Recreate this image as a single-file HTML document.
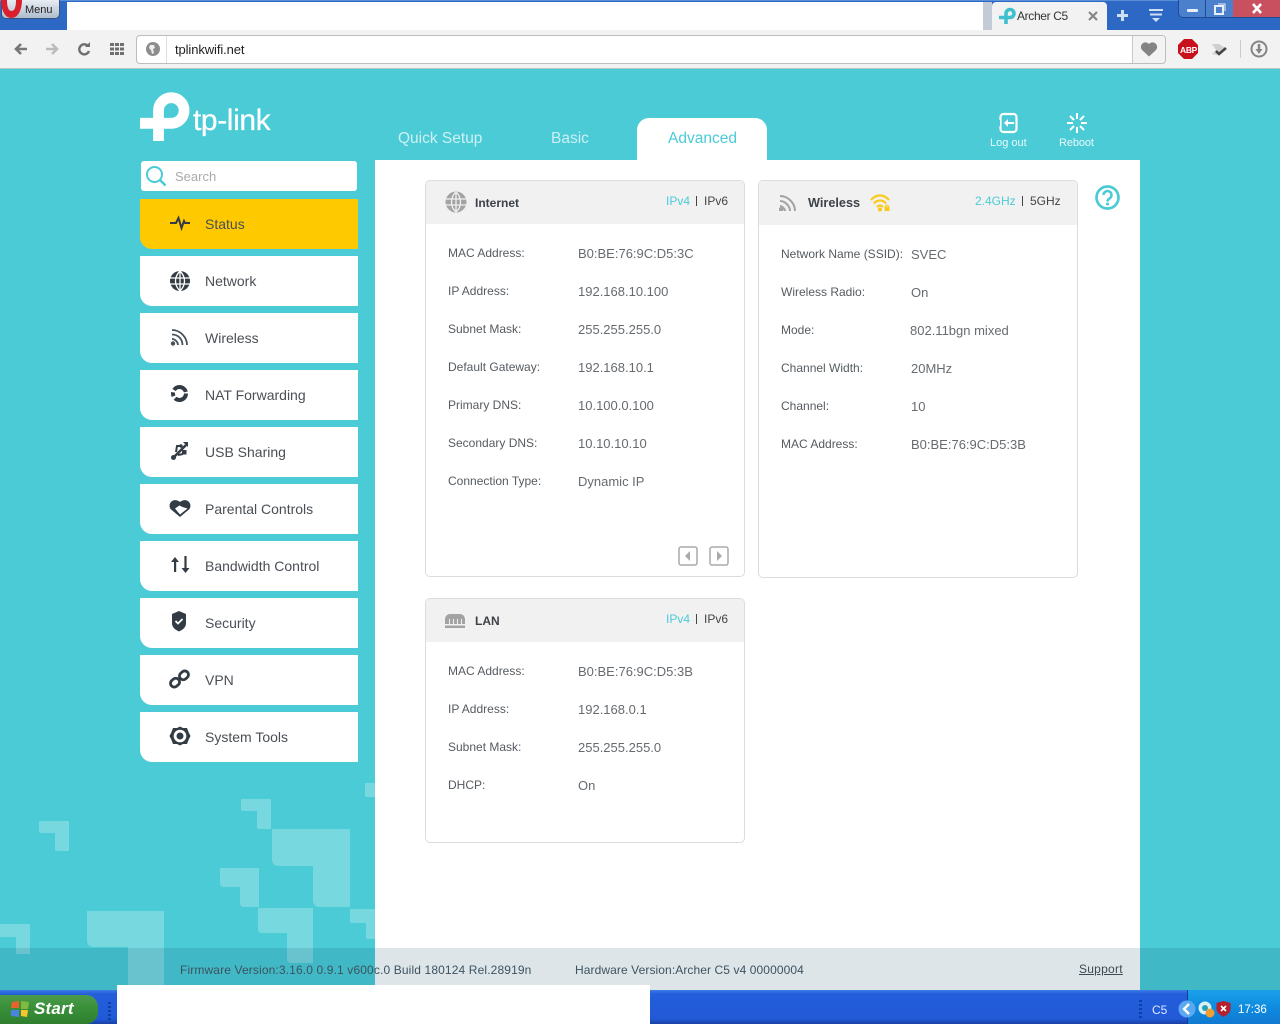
<!DOCTYPE html>
<html><head><meta charset="utf-8"><title>Archer C5</title>
<style>
html,body{margin:0;padding:0}
body{width:1280px;height:1024px;overflow:hidden;position:relative;background:#4acbd6;font-family:"Liberation Sans",sans-serif;color:#4a4f55;font-size:12px}
div,span,svg{position:absolute}
.t{white-space:nowrap;letter-spacing:0;line-height:14px}
.n{position:absolute;left:140px;width:218px;height:50px;background:#fff;border-bottom-left-radius:12px}
.n .t{left:65px;top:18px;font-size:14px;color:#494f55;letter-spacing:0}
.n svg{left:28px;top:12px}
.p{position:absolute;background:#fff;border:1px solid #dcdcdc;border-radius:5px;box-sizing:border-box}
.h{left:0;right:0;top:0;background:#f1f1f1;border-radius:4px 4px 0 0}
.b{font-weight:bold;font-size:12px;color:#3c4248;margin-top:1px}
.l{color:#555b60;margin-top:1px}
.v{color:#666b70;font-size:13px;margin-top:1px}
.c{color:#4acbd6}
.tab{font-size:15.5px;line-height:18px;color:#fff;opacity:.72}
</style></head><body>

<!-- browser chrome -->
<div style="left:0;top:0;width:1280px;height:30px;background:#2d68c4;border-top:1px solid #5a8fd8;box-sizing:border-box"></div>
<div style="left:67px;top:2px;width:916px;height:28px;background:#fff"></div>
<div style="left:983px;top:2px;width:9px;height:28px;background:#c3cbd6"></div>
<div style="left:992px;top:2px;width:115px;height:28px;background:#f2f2f2;border-radius:4px 4px 0 0"></div>
<div style="left:1px;top:0;width:59px;height:19px;background:linear-gradient(#e8edf3,#aebccd);border:1px solid #33527f;border-top:0;border-radius:0 0 5px 5px;box-sizing:border-box"></div>
<div class="t" style="left:25px;top:3px;font-size:11px;color:#222">Menu</div>
<svg style="left:0;top:0" width="24" height="19" viewBox="0 0 24 19"><path d="M1 0c0 10 4 18 10.500 18S22 10 22 0h-6c0 6-1 11-4.500 11S7 6 7 0z" fill="#d9202c"/></svg>
<svg style="left:998px;top:6px" width="19" height="19" viewBox="0 0 19 19"><path d="M8 18V7.500a4 4 0 1 1 4 4H1" fill="none" stroke="#3fc0cf" stroke-width="3.600"/></svg>
<div class="t" style="left:1017px;top:9px;font-size:12px;color:#333;letter-spacing:-.35px">Archer C5</div>
<svg style="left:1087px;top:10px" width="12" height="12" viewBox="0 0 12 12"><path d="M2 2l8 8M10 2l-8 8" stroke="#888" stroke-width="2.200"/></svg>
<svg style="left:1116px;top:9px" width="13" height="13" viewBox="0 0 13 13"><path d="M6.500 1v11M1 6.500h11" stroke="#cfe0f5" stroke-width="3"/></svg>
<svg style="left:1149px;top:9px" width="14" height="14" viewBox="0 0 14 14"><path d="M0 1h14M1 5.500h12" stroke="#cfe0f5" stroke-width="2"/><path d="M3 9h8l-4 4z" fill="#cfe0f5"/></svg>
<div style="left:1178px;top:0;width:28px;height:18px;background:#4b80cc;border:1px solid #1f4b96;border-top:0;border-radius:0 0 0 5px;box-sizing:border-box"></div>
<div style="left:1206px;top:0;width:27px;height:18px;background:#4b80cc;border-bottom:1px solid #1f4b96;box-sizing:border-box"></div>
<div style="left:1233px;top:0;width:47px;height:18px;background:#c9505f;border-bottom:1px solid #1f4b96;box-sizing:border-box"></div>
<div style="left:1187px;top:9px;width:11px;height:3px;background:#e8eef6;border-radius:1px"></div>
<svg style="left:1214px;top:3px" width="12" height="12" viewBox="0 0 12 12"><rect x="1" y="3" width="8" height="8" fill="none" stroke="#e8eef6" stroke-width="2"/><path d="M4 1h7v7" fill="none" stroke="#e8eef6"/></svg>
<svg style="left:1251px;top:3px" width="12" height="11" viewBox="0 0 12 11"><path d="M2 1l8 9M10 1l-8 9" stroke="#fff" stroke-width="2.600"/></svg>

<div style="left:0;top:30px;width:1280px;height:39px;background:#f2f2f2;border-bottom:1px solid #b9c9c2;box-sizing:border-box"></div>
<svg style="left:13px;top:41px" width="16" height="16" viewBox="0 0 16 16"><path d="M14 8H4M8 3L3 8l5 5" fill="none" stroke="#777" stroke-width="2.600"/></svg>
<svg style="left:44px;top:41px" width="16" height="16" viewBox="0 0 16 16"><path d="M2 8h10M8 3l5 5-5 5" fill="none" stroke="#bbb" stroke-width="2.600"/></svg>
<svg style="left:77px;top:41px" width="15" height="16" viewBox="0 0 15 16"><path d="M12 10a5 5 0 1 1-1-5" fill="none" stroke="#6f6f6f" stroke-width="2.400"/><path d="M8 6h5V1z" fill="#6f6f6f"/></svg>
<svg style="left:110px;top:43px" width="14" height="12" viewBox="0 0 14 12" fill="#6f6f6f"><rect width="4" height="3"/><rect x="5" width="4" height="3"/><rect x="10" width="4" height="3"/><rect y="4.500" width="4" height="3"/><rect x="5" y="4.500" width="4" height="3"/><rect x="10" y="4.500" width="4" height="3"/><rect y="9" width="4" height="3"/><rect x="5" y="9" width="4" height="3"/><rect x="10" y="9" width="4" height="3"/></svg>
<div style="left:136px;top:35px;width:1030px;height:29px;background:#fff;border:1px solid #bdbdbd;border-radius:4px;box-sizing:border-box"></div>
<div style="left:166px;top:36px;width:1px;height:27px;background:#ddd"></div>
<div style="left:1132px;top:36px;width:33px;height:27px;background:#f3f3f3;border-left:1px solid #c8c8c8;border-radius:0 4px 4px 0;box-sizing:border-box"></div>
<svg style="left:146px;top:42px" width="14" height="14" viewBox="0 0 14 14"><circle cx="7" cy="7" r="7" fill="#8c8c8c"/><path d="M4 3h4l1 3-2 1 1 4-2 1-1-4-2-2z" fill="#eee"/></svg>
<div class="t" style="left:175px;top:43px;font-size:13px;color:#222;letter-spacing:-.1px">tplinkwifi.net</div>
<svg style="left:1140px;top:41px" width="18" height="16" viewBox="0 0 18 16"><path d="M9 15.500L2 9a4.500 4.500 0 0 1 7-6 4.500 4.500 0 0 1 7 6z" fill="#848484"/></svg>
<svg style="left:1178px;top:39px" width="20" height="20" viewBox="0 0 20 20"><path d="M6 0h8l6 6v8l-6 6H6l-6-6V6z" fill="#c9111e"/></svg>
<div class="t" style="left:1180px;top:43px;font-size:8.500px;font-weight:bold;color:#fff;letter-spacing:-.3px">ABP</div>
<svg style="left:1210px;top:41px" width="18" height="16" viewBox="0 0 18 16"><path d="M2 3h7l6 4-8 7-5-1 4-4z" fill="#cfcfcf"/><path d="M6 10l3 3 7-6" fill="none" stroke="#444" stroke-width="2.500"/></svg>
<div style="left:1240px;top:40px;width:1px;height:18px;background:#ccc"></div>
<svg style="left:1250px;top:40px" width="18" height="18" viewBox="0 0 18 18"><circle cx="9" cy="9" r="7.500" fill="none" stroke="#858585" stroke-width="2"/><path d="M9 4v6" stroke="#858585" stroke-width="2.500"/><path d="M5.500 9h7L9 14z" fill="#858585"/></svg>

<!-- decorative background -->
<svg style="left:0;top:769px" width="375" height="221" viewBox="0 769 375 221" fill="#fff" fill-opacity=".26">
<path d="M39 821h30v30H57q-2 0-2-2v-16H41q-2 0-2-2z"/>
<path d="M241 799h30v30h-12q-2 0-2-2v-16h-14q-2 0-2-2z"/>
<path d="M272 829h78v78h-30q-7 0-7-7v-34h-34q-7 0-7-7z"/>
<path d="M220 868h39v39h-15q-4 0-4-4v-16h-16q-4 0-4-4z"/>
<path d="M258 908h55v55h-22q-4 0-4-4v-26h-25q-4 0-4-4z"/>
<path d="M350 909h25v30h-7q-2 0-2-2v-14h-14q-2 0-2-2z"/>
<path d="M365 783h10v14h-8q-2 0-2-2z"/>
<path d="M87 911h77v79h-36v-43h-34q-7 0-7-7z"/>
<path d="M0 924h30v30H18q-2 0-2-2v-15H0z"/>
</svg>

<!-- header -->
<svg style="left:140px;top:92px" width="50" height="50" viewBox="0 0 50 50"><path d="M18.500 49V18.500a12.800 12.800 0 1 1 12.800 12.800H0" fill="none" stroke="#fff" stroke-width="10.800"/></svg>
<div class="t" style="left:193px;top:103px;font-size:30px;line-height:36px;color:#fff;letter-spacing:-.4px;-webkit-text-stroke:.25px #fff">tp-link</div>
<div class="t tab" style="left:398px;top:130px">Quick Setup</div>
<div class="t tab" style="left:551px;top:130px">Basic</div>
<div style="left:637px;top:118px;width:130px;height:44px;background:#fff;border-radius:12px 12px 0 0"></div>
<div class="t tab" style="left:668px;top:130px;color:#4acbd6;opacity:1">Advanced</div>
<svg style="left:999px;top:112px" width="20" height="22" viewBox="0 0 20 22"><rect x="1.500" y="2" width="16" height="18" rx="3" fill="none" stroke="#fff" stroke-width="2.200"/><path d="M15 11H8" stroke="#fff" stroke-width="2"/><path d="M9 7l-4 4 4 4z" fill="#fff"/><rect x="0" y="8" width="1" height="6" fill="#4acbd6"/></svg>
<div class="t" style="left:990px;top:136px;font-size:11px;color:#e8fafc">Log out</div>
<svg style="left:1066px;top:112px" width="22" height="22" viewBox="0 0 22 22"><path d="M11 1v6M11 15v6M1 11h6M15 11h6M4 4l4 4M14 14l4 4M18 4l-4 4M8 14l-4 4" stroke="#fff" stroke-width="2"/></svg>
<div class="t" style="left:1059px;top:136px;font-size:11px;color:#e8fafc;letter-spacing:-.1px">Reboot</div>

<!-- content -->
<div style="left:375px;top:160px;width:765px;height:830px;background:#fff"></div>

<!-- search -->
<div style="left:141px;top:161px;width:216px;height:30px;background:#fff;border-radius:3px"></div>
<svg style="left:145px;top:165px" width="22" height="22" viewBox="0 0 22 22"><circle cx="9.500" cy="9.500" r="7.500" fill="none" stroke="#4acbd6" stroke-width="2"/><path d="M15 15l5.500 5.500" stroke="#4acbd6" stroke-width="2.500"/></svg>
<div class="t" style="left:175px;top:170px;font-size:13px;color:#aaa">Search</div>

<!-- nav -->
<div class="n" style="top:199px;background:#ffc900"><svg width="24" height="24" viewBox="0 0 24 24"><path d="M2 12h6l2.500-5 3 10 2.500-7 1 2h5" fill="none" stroke="#333c44" stroke-width="2"/></svg><div class="t">Status</div></div>
<div class="n" style="top:256px"><svg width="24" height="24" viewBox="0 0 24 24"><circle cx="12" cy="13" r="10" fill="#333c44"/><path d="M2 10h20M2 16h20M12 3v20M12 3c-6 6-6 14 0 20M12 3c6 6 6 14 0 20" fill="none" stroke="#fff" stroke-width="1.300"/></svg><div class="t">Network</div></div>
<div class="n" style="top:313px"><svg width="24" height="24" viewBox="0 0 24 24" fill="none" stroke="#4a5259" stroke-width="1.800"><path d="M4 5c8 0 15 7 15 15M4 9.500c6 0 10.500 4.500 10.500 10.500M4 14c3 0 6 3 6 6"/><circle cx="5" cy="18.500" r="1.300" fill="#333c44"/></svg><div class="t">Wireless</div></div>
<div class="n" style="top:370px"><svg width="24" height="24" viewBox="0 0 24 24" fill="none" stroke="#333c44" stroke-width="4"><circle cx="11.500" cy="11.500" r="6.500" stroke-dasharray="15 2.500 4 2.500 15 2.500"/></svg><div class="t">NAT Forwarding</div></div>
<div class="n" style="top:427px"><svg width="24" height="24" viewBox="0 0 24 24" fill="#333c44"><path d="M5 19L18 6" stroke="#333c44" stroke-width="2.600"/><circle cx="5.500" cy="18.500" r="2.500"/><rect x="14" y="11" width="4.500" height="4.500"/><path d="M8 13l1-6h3M10 16l5-1" fill="none" stroke="#333c44" stroke-width="2"/><circle cx="13" cy="7" r="1.700"/><path d="M15 3h5v5z"/></svg><div class="t">USB Sharing</div></div>
<div class="n" style="top:484px"><svg width="24" height="24" viewBox="0 0 24 24"><path d="M12 21L2.500 13C-1 7 6 1 12 6c6-5 13 1 9.500 7z" fill="#333c44"/><path d="M7 12.500l4.500-3 3 1.500 5 1.500-7.500 6z" fill="#fff"/></svg><div class="t">Parental Controls</div></div>
<div class="n" style="top:541px"><svg width="24" height="24" viewBox="0 0 24 24" fill="#333c44"><path d="M7 4l-4 5h8z"/><rect x="6" y="8" width="2.200" height="11"/><path d="M17.500 20l-4-5h8z"/><rect x="16.400" y="3" width="2.200" height="13"/></svg><div class="t">Bandwidth Control</div></div>
<div class="n" style="top:598px"><svg width="24" height="24" viewBox="0 0 24 24"><path d="M11 1l7 3v9c0 5-4 7-7 8.500-3-1.500-7-3.500-7-8.500V4z" fill="#333c44"/><path d="M7.500 11l2.500 2.500 4.500-4.500" fill="none" stroke="#fff" stroke-width="1.800"/></svg><div class="t">Security</div></div>
<div class="n" style="top:655px"><svg width="24" height="24" viewBox="0 0 24 24" fill="none" stroke="#333c44" stroke-width="2.800"><rect x="2.500" y="12" width="9.500" height="7.500" rx="3.700" transform="rotate(-40 7 16)"/><rect x="11" y="4.500" width="9.500" height="7.500" rx="3.700" transform="rotate(-40 16 8)"/></svg><div class="t">VPN</div></div>
<div class="n" style="top:712px"><svg width="24" height="24" viewBox="0 0 24 24"><path d="M12 2.500l3 1.500h4l1.500 4 2 4-2 4-1.500 4h-4l-3 1.500-3-1.500H5l-1.500-4-2-4 2-4L5 4h4z" fill="#333c44"/><circle cx="12" cy="12" r="6.300" fill="#fff"/><circle cx="12" cy="12" r="3.500" fill="#333c44"/></svg><div class="t">System Tools</div></div>

<!-- Internet panel -->
<div class="p" style="left:425px;top:180px;width:320px;height:397px"><div class="h" style="height:43px"></div></div>
<svg style="left:445px;top:191px" width="22" height="22" viewBox="0 0 22 22"><circle cx="11" cy="11" r="10.500" fill="#a3a3a3"/><path d="M1 8h20M1 14h20M11 1v20M11 1c-6 5-6 15 0 20M11 1c6 5 6 15 0 20" fill="none" stroke="#f1f1f1" stroke-width="1.300"/></svg>
<div class="t b" style="left:475px;top:195px">Internet</div>
<div class="t c" style="left:666px;top:194px">IPv4</div><div style="left:696px;top:196px;width:1px;height:10px;background:#444"></div><div class="t" style="left:704px;top:194px;color:#444">IPv6</div>
<div class="t l" style="left:448px;top:245px">MAC Address:</div><div class="t v" style="left:578px;top:246px">B0:BE:76:9C:D5:3C</div>
<div class="t l" style="left:448px;top:283px">IP Address:</div><div class="t v" style="left:578px;top:284px">192.168.10.100</div>
<div class="t l" style="left:448px;top:321px">Subnet Mask:</div><div class="t v" style="left:578px;top:322px">255.255.255.0</div>
<div class="t l" style="left:448px;top:359px">Default Gateway:</div><div class="t v" style="left:578px;top:360px">192.168.10.1</div>
<div class="t l" style="left:448px;top:397px">Primary DNS:</div><div class="t v" style="left:578px;top:398px">10.100.0.100</div>
<div class="t l" style="left:448px;top:435px">Secondary DNS:</div><div class="t v" style="left:578px;top:436px">10.10.10.10</div>
<div class="t l" style="left:448px;top:473px">Connection Type:</div><div class="t v" style="left:578px;top:474px">Dynamic IP</div>
<svg style="left:678px;top:546px" width="20" height="20" viewBox="0 0 20 20"><rect x="1" y="1" width="18" height="18" rx="2" fill="none" stroke="#aaa" stroke-width="1.500"/><path d="M12 5l-5 5 5 5z" fill="#aaa"/></svg>
<svg style="left:709px;top:546px" width="20" height="20" viewBox="0 0 20 20"><rect x="1" y="1" width="18" height="18" rx="2" fill="none" stroke="#aaa" stroke-width="1.500"/><path d="M8 5l5 5-5 5z" fill="#aaa"/></svg>

<!-- Wireless panel -->
<div class="p" style="left:758px;top:180px;width:320px;height:398px"><div class="h" style="height:44px"></div></div>
<svg style="left:779px;top:194px" width="18" height="17" viewBox="0 0 18 17" fill="none" stroke="#a3a3a3" stroke-width="2"><path d="M1 2c8 0 15 7 15 15M1 7c5 0 10 5 10 10M1 12c2 0 5 3 5 5"/><circle cx="2" cy="15.500" r="1.400" fill="#a3a3a3"/></svg>
<div class="t b" style="left:808px;top:195px;font-size:12.700px">Wireless</div>
<svg style="left:870px;top:194px" width="22" height="18" viewBox="0 0 22 18" fill="none" stroke="#f8cb1c" stroke-width="2.200"><path d="M1 6c5-6 13-6 18 0M4 9.500c3-4 9-4 12 0M7 13c2-2 4-2 6 0"/><circle cx="10" cy="15.500" r="1" fill="#f8cb1c"/><rect x="14.500" y="12.500" width="5" height="4.500" fill="#f8cb1c" stroke="none"/><path d="M15.500 12.500a1.500 1.500 0 0 1 3 0" stroke-width="1"/></svg>
<div class="t c" style="left:975px;top:194px">2.4GHz</div><div style="left:1022px;top:196px;width:1px;height:10px;background:#444"></div><div class="t" style="left:1030px;top:194px;color:#444">5GHz</div>
<div class="t l" style="left:781px;top:246px">Network Name (SSID):</div><div class="t v" style="left:911px;top:247px">SVEC</div>
<div class="t l" style="left:781px;top:284px">Wireless Radio:</div><div class="t v" style="left:911px;top:285px">On</div>
<div class="t l" style="left:781px;top:322px">Mode:</div><div class="t v" style="left:910px;top:323px">802.11bgn mixed</div>
<div class="t l" style="left:781px;top:360px">Channel Width:</div><div class="t v" style="left:911px;top:361px">20MHz</div>
<div class="t l" style="left:781px;top:398px">Channel:</div><div class="t v" style="left:911px;top:399px">10</div>
<div class="t l" style="left:781px;top:436px">MAC Address:</div><div class="t v" style="left:911px;top:437px">B0:BE:76:9C:D5:3B</div>

<svg style="left:1095px;top:185px" width="25" height="25" viewBox="0 0 25 25"><circle cx="12.500" cy="12.500" r="11" fill="none" stroke="#4acbd6" stroke-width="2.700"/><path d="M8.500 10a4 4 0 1 1 6 3.500c-1.500 1-2 1.500-2 3" fill="none" stroke="#4acbd6" stroke-width="2.500"/><circle cx="12.500" cy="19" r="1.500" fill="#4acbd6"/></svg>

<!-- LAN panel -->
<div class="p" style="left:425px;top:598px;width:320px;height:245px"><div class="h" style="height:43px"></div></div>
<svg style="left:445px;top:613px" width="20" height="15" viewBox="0 0 20 15" fill="#a3a3a3"><path d="M0 11V6a5 5 0 0 1 5-5h10a5 5 0 0 1 5 5v5h-3V6h-1v5h-3V6h-1v5H9V6H8v5H5V6H4v5z"/><rect y="12.500" width="20" height="2.500"/></svg>
<div class="t b" style="left:475px;top:613px">LAN</div>
<div class="t c" style="left:666px;top:612px">IPv4</div><div style="left:696px;top:614px;width:1px;height:10px;background:#444"></div><div class="t" style="left:704px;top:612px;color:#444">IPv6</div>
<div class="t l" style="left:448px;top:663px">MAC Address:</div><div class="t v" style="left:578px;top:664px">B0:BE:76:9C:D5:3B</div>
<div class="t l" style="left:448px;top:701px">IP Address:</div><div class="t v" style="left:578px;top:702px">192.168.0.1</div>
<div class="t l" style="left:448px;top:739px">Subnet Mask:</div><div class="t v" style="left:578px;top:740px">255.255.255.0</div>
<div class="t l" style="left:448px;top:777px">DHCP:</div><div class="t v" style="left:578px;top:778px">On</div>

<!-- footer -->
<div style="left:0;top:948px;width:1280px;height:42px;background:rgba(0,60,90,.133)"></div>
<div class="t" style="left:180px;top:963px;color:#3d5360;letter-spacing:.13px">Firmware Version:3.16.0 0.9.1 v600c.0 Build 180124 Rel.28919n</div>
<div class="t" style="left:575px;top:963px;color:#3d5360;letter-spacing:.09px">Hardware Version:Archer C5 v4 00000004</div>
<div class="t" style="left:1079px;top:962px;color:#3d4a52;text-decoration:underline;letter-spacing:.25px">Support</div>

<!-- taskbar -->
<div style="left:0;top:990px;width:1280px;height:34px;background:linear-gradient(#3a7de8 0,#245edb 12%,#2159d6 85%,#1941a5 100%)"></div>
<div style="left:0;top:995px;width:98px;height:29px;background:linear-gradient(#4d9a4d,#3a913a 40%,#2f7f2f);border-radius:0 12px 12px 0"></div>
<svg style="left:10px;top:1000px" width="20" height="18" viewBox="0 0 20 18"><path d="M2 2l7-1v7H1z" fill="#e8632b"/><path d="M11 1l8 1-1 7h-7z" fill="#7fbb3c"/><path d="M1 10h8v7l-8-1z" fill="#4b84e0"/><path d="M11 10h7l-1 7-6-1z" fill="#f5c52a"/></svg>
<div class="t" style="left:34px;top:999px;font-size:17px;line-height:20px;font-weight:bold;font-style:italic;color:#fff;letter-spacing:.2px">Start</div>
<div style="left:108px;top:1002px;width:3px;height:20px;background:repeating-linear-gradient(#0d3fa8 0 2px,transparent 2px 4px)"></div>
<div style="left:117px;top:985px;width:533px;height:39px;background:#fff"></div>
<div style="left:1139px;top:1000px;width:3px;height:20px;background:repeating-linear-gradient(#0d3fa8 0 2px,transparent 2px 4px)"></div>
<div style="left:1187px;top:990px;width:93px;height:34px;background:linear-gradient(#1ca0ea,#0e8ce0 50%,#1179d0);border-left:1px solid #0f3f9a;box-sizing:border-box"></div>
<div class="t" style="left:1152px;top:1003px;font-size:12px;color:#dce8ff">C5</div>
<svg style="left:1178px;top:1000px" width="18" height="18" viewBox="0 0 18 18"><circle cx="9" cy="9" r="8.500" fill="#5aa9f0"/><path d="M11 4L6 9l5 5" fill="none" stroke="#fff" stroke-width="2.400"/></svg>
<svg style="left:1198px;top:1001px" width="17" height="17" viewBox="0 0 17 17"><circle cx="7" cy="7" r="6.500" fill="#d9f1f5"/><circle cx="7" cy="7" r="3" fill="#27a1b5"/><circle cx="12" cy="12" r="4.500" fill="#f0a030"/></svg>
<svg style="left:1216px;top:1001px" width="15" height="16" viewBox="0 0 15 16"><path d="M7.500 0l7 2v6c0 4-4 6-7 8-3-2-7-4-7-8V2z" fill="#b5202c"/><path d="M5 5l5 5M10 5l-5 5" stroke="#fff" stroke-width="1.600"/></svg>
<div class="t" style="left:1238px;top:1003px;font-size:11.500px;color:#fff">17:36</div>
</body></html>
